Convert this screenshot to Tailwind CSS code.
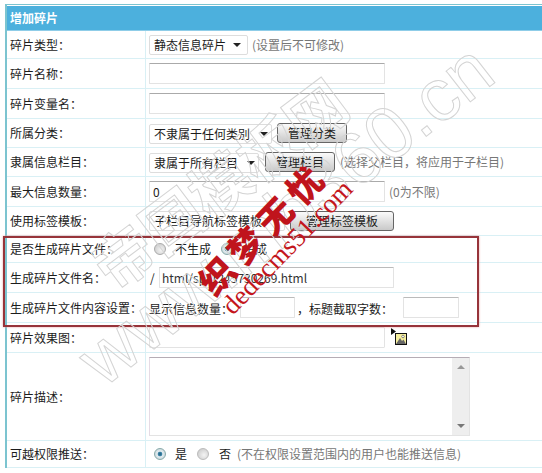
<!DOCTYPE html>
<html lang="zh-CN">

<head>
    <meta charset="UTF-8">
    <meta name="viewport" content="width=device-width, initial-scale=1.0">
    <title>增加碎片</title>
    <script src="https://cdn.jsdelivr.net/npm/@tailwindcss/browser@4"></script>
</head>

<body class="bg-white overflow-hidden">
    <div class="relative w-[542px] h-[473px] overflow-hidden pt-[4px] pl-[5px] text-[12px] leading-[16px] text-[#1c1c1c] font-['Noto_Sans_CJK_SC','Liberation_Sans',sans-serif]">
        <div class="border-l-2 border-t border-[#7cc4d0]">
            <h1 class="h-[25px] mt-px bg-[#4cb0dd] border-b border-[#8fcde8] pl-[3px] flex items-center text-white font-bold text-[12px]">增加碎片</h1>

            <!-- 表单行 -->
            <div class="grid grid-cols-[139px_1fr] h-[28px] border-b border-[#d9f0f5]">
                <div class="border-r border-[#d9f0f5] pl-[3px] flex items-center">碎片类型：</div>
                <div class="flex items-center pl-[3px] text-[#777]">
                    <div class="w-[99px] h-[20px] border border-[#ddd] rounded-[2px] flex items-center justify-between pl-[4px] pr-[6px] text-[#1c1c1c]"><span>静态信息碎片</span><span class="w-0 h-0 border-x-[4px] border-x-transparent border-t-[4px] border-t-[#222]"></span></div>
                    <span class="ml-[4px]">(设置后不可修改)</span>
                </div>
            </div>
            <div class="grid grid-cols-[139px_1fr] h-[30px] border-b border-[#d9f0f5]">
                <div class="border-r border-[#d9f0f5] pl-[3px] flex items-center">碎片名称：</div>
                <div class="flex items-center pl-[3px]"><input class="w-[236px] h-[21px] border border-[#e3e3e3] border-t-[#aaa] rounded-[1px]"></div>
            </div>
            <div class="grid grid-cols-[139px_1fr] h-[30px] border-b border-[#d9f0f5]">
                <div class="border-r border-[#d9f0f5] pl-[3px] flex items-center">碎片变量名：</div>
                <div class="flex items-center pl-[3px]"><input class="w-[236px] h-[21px] border border-[#e3e3e3] border-t-[#aaa] rounded-[1px]"></div>
            </div>
            <div class="grid grid-cols-[139px_1fr] h-[29px] border-b border-[#d9f0f5]">
                <div class="border-r border-[#d9f0f5] pl-[3px] flex items-center">所属分类：</div>
                <div class="flex items-center pl-[3px]">
                    <div class="w-[123px] h-[20px] mt-[2px] border border-[#ddd] rounded-[2px] flex items-center justify-between pl-[4px] pr-[3px]"><span>不隶属于任何类别</span><span class="w-0 h-0 border-x-[4px] border-x-transparent border-t-[4px] border-t-[#222]"></span></div>
                    <button class="ml-[5px] w-[70px] h-[20px] border border-[#666] rounded-[3px] bg-linear-to-b from-[#fbfbfb] to-[#c9c9c9]">管理分类</button>
                </div>
            </div>
            <div class="grid grid-cols-[139px_1fr] h-[29px] border-b border-[#d9f0f5]">
                <div class="border-r border-[#d9f0f5] pl-[3px] flex items-center">隶属信息栏目：</div>
                <div class="flex items-center pl-[3px] text-[#777]">
                    <div class="w-[110px] h-[20px] mt-[2px] border border-[#ddd] rounded-[2px] flex items-center justify-between pl-[4px] pr-[3px] text-[#1c1c1c]"><span>隶属于所有栏目</span><span class="w-0 h-0 border-x-[4px] border-x-transparent border-t-[4px] border-t-[#222]"></span></div>
                    <button class="ml-[6px] w-[70px] h-[20px] border border-[#666] rounded-[3px] bg-linear-to-b from-[#fbfbfb] to-[#c9c9c9] text-[#1c1c1c]">管理栏目</button>
                    <span class="ml-[5px]">(选择父栏目，将应用于子栏目)</span>
                </div>
            </div>
            <div class="grid grid-cols-[139px_1fr] h-[30px] border-b border-[#d9f0f5]">
                <div class="border-r border-[#d9f0f5] pl-[3px] flex items-center">最大信息数量：</div>
                <div class="flex items-center pl-[3px] text-[#777]">
                    <input value="0" class="w-[236px] h-[21px] border border-[#e3e3e3] border-t-[#aaa] rounded-[1px] pl-[3px] text-[#1c1c1c]">
                    <span class="ml-[4px]">(0为不限)</span>
                </div>
            </div>
            <div class="grid grid-cols-[139px_1fr] h-[29px] border-b border-[#d9f0f5]">
                <div class="border-r border-[#d9f0f5] pl-[3px] flex items-center">使用标签模板：</div>
                <div class="flex items-center pl-[3px]">
                    <div class="w-[136px] h-[20px] border border-[#ddd] rounded-[2px] flex items-center justify-between pl-[4px] pr-[3px]"><span>子栏目导航标签模板</span><span class="w-0 h-0 border-x-[4px] border-x-transparent border-t-[4px] border-t-[#222]"></span></div>
                    <button class="ml-[5px] w-[104px] h-[20px] border border-[#666] rounded-[3px] bg-linear-to-b from-[#fbfbfb] to-[#c9c9c9]">管理标签模板</button>
                </div>
            </div>
            <div class="grid grid-cols-[139px_1fr] h-[27px] border-b border-[#d9f0f5]">
                <div class="border-r border-[#d9f0f5] pl-[3px] flex items-center">是否生成碎片文件：</div>
                <div class="flex items-center pl-[8px]">
                    <span class="w-[12px] h-[12px] rounded-full border border-[#aaa] bg-[radial-gradient(circle_at_60%_60%,#f4f4f4,#c4c4c4)]"></span>
                    <span class="ml-[9px] w-[46px]">不生成</span>
                    <span class="w-[12px] h-[12px] rounded-full border border-[#8aa] bg-[radial-gradient(circle,#1f5f80_0,#3f86a8_28%,#e4edf0_38%,#b9c9d0_100%)]"></span>
                    <span class="ml-[10px]">生成</span>
                </div>
            </div>
            <div class="grid grid-cols-[139px_1fr] h-[30px] border-b border-[#d9f0f5]">
                <div class="border-r border-[#d9f0f5] pl-[3px] flex items-center">生成碎片文件名：</div>
                <div class="flex items-center pl-[4px]">
                    <span class="w-[6px]">/</span>
                    <input value="html/sp/1245730269.html" class="ml-[3px] w-[235px] h-[21px] border border-[#e3e3e3] border-t-[#bbb] rounded-[1px] pl-[2px] text-[#333]">
                </div>
            </div>
            <div class="grid grid-cols-[139px_1fr] h-[30px] border-b border-[#d9f0f5]">
                <div class="border-r border-[#d9f0f5] pl-[3px] flex items-center">生成碎片文件内容设置：</div>
                <div class="flex items-center pl-[3px]">
                    <span class="w-[91px] mt-[2px]">显示信息数量：</span>
                    <input class="w-[55px] h-[21px] border border-[#e3e3e3] border-t-[#bbb] rounded-[1px]">
                    <span class="w-[106px] ml-[2px] mt-[2px]">，标题截取字数：</span>
                    <input class="w-[56px] h-[21px] border border-[#e3e3e3] border-t-[#bbb] rounded-[1px]">
                </div>
            </div>
            <div class="grid grid-cols-[139px_1fr] h-[30px] border-b border-[#d9f0f5]">
                <div class="border-r border-[#d9f0f5] pl-[3px] flex items-center">碎片效果图：</div>
                <div class="flex items-center pl-[3px]">
                    <input class="w-[236px] h-[21px] border border-[#e3e3e3] rounded-[1px]">
                    <svg class="ml-[6px] -mt-[2px]" width="17" height="18" viewBox="0 0 17 18">
                        <path d="M0 0L5 3.5L0 7Z" fill="#111" />
                        <rect x="4.5" y="5.500" width="11" height="11" fill="#f6ef9e" stroke="#111" />
                        <path d="M5 16L9 10L11 13L12.500 11.500L15 16Z" fill="#666" />
                        <circle cx="12" cy="8.500" r="1.300" fill="#fff" stroke="#444" stroke-width="0.600" />
                    </svg>
                </div>
            </div>
            <div class="grid grid-cols-[139px_1fr] h-[88px] border-b border-[#d9f0f5]">
                <div class="border-r border-[#d9f0f5] pl-[3px] flex items-center">碎片描述：</div>
                <div class="pl-[3px] pt-[4px]">
                    <div class="w-[321px] h-[79px] border border-[#e3e3e3] border-t-[#b5adb5] border-l-[#e5dbe5] flex justify-end">
                        <div class="w-[17px] bg-[#eeeeee] flex flex-col items-center justify-between py-[7px]">
                            <span class="w-0 h-0 border-x-[4px] border-x-transparent border-b-[4px] border-b-[#999]"></span>
                            <span class="w-0 h-0 border-x-[4px] border-x-transparent border-t-[4px] border-t-[#777]"></span>
                        </div>
                    </div>
                </div>
            </div>
            <div class="grid grid-cols-[139px_1fr] h-[27px] border-b border-[#d9f0f5]">
                <div class="border-r border-[#d9f0f5] pl-[3px] flex items-center">可越权限推送：</div>
                <div class="flex items-center pl-[8px] text-[#777]">
                    <span class="w-[12px] h-[12px] rounded-full border border-[#8aa] bg-[radial-gradient(circle,#1f5f80_0,#3f86a8_28%,#e4edf0_38%,#b9c9d0_100%)]"></span>
                    <span class="ml-[9px] w-[22px] text-[#1c1c1c]">是</span>
                    <span class="w-[12px] h-[12px] rounded-full border border-[#bbb] bg-[radial-gradient(circle_at_60%_60%,#f4f4f4,#c4c4c4)]"></span>
                    <span class="ml-[10px] w-[12px] text-[#1c1c1c]">否</span>
                    <span class="ml-[6px]">(不在权限设置范围内的用户也能推送信息)</span>
                </div>
            </div>
        </div>

        <!-- 红框标注 -->
        <div class="absolute left-[3px] top-[236px] w-[476px] h-[91px] border-2 border-[#97343a] shadow-[0_0_2px_#e8a0a0] pointer-events-none"></div>

        <!-- 水印 -->
        <div class="absolute left-[58px] top-[152px] w-[320px] text-center whitespace-nowrap rotate-[-37deg] text-[60px] leading-[60px] font-bold text-transparent [-webkit-text-stroke:1px_#d4d4d4] pointer-events-none">帝国模板网</div>
        <div class="absolute left-[35px] top-[180px] w-[500px] text-center whitespace-nowrap rotate-[-38deg] text-[74px] leading-[70px] text-transparent font-['Liberation_Sans',sans-serif] [-webkit-text-stroke:1px_#d4d4d4] pointer-events-none">www.mb360.cn</div>
        <div class="absolute left-[172px] top-[205px] w-[180px] text-center whitespace-nowrap rotate-[-46deg] text-[35px] leading-[44px] tracking-[7px] font-black text-[#c0141c] pointer-events-none">织梦无忧</div>
        <div class="absolute left-[197px] top-[233px] w-[180px] text-center whitespace-nowrap rotate-[-46deg] text-[27px] leading-[28px] text-[#c4161c] font-['Liberation_Serif',serif] pointer-events-none">dedecms51.com</div>
    </div>
</body>

</html>
